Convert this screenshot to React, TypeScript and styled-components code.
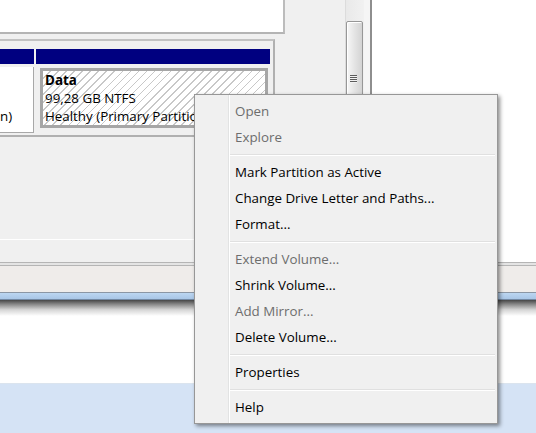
import React from 'react';
import styled, { createGlobalStyle } from 'styled-components';

const Global = createGlobalStyle`
  *, *::before, *::after { box-sizing: border-box; }
  html, body { margin: 0; padding: 0; background: #fff; }
  body {
    width: 536px; height: 433px; overflow: hidden;
    font-family: "Segoe UI", "Open Sans", "Noto Sans", sans-serif;
    font-size: 13.35px; color: #000;
  }
`;

const Screen = styled.div`
  position: relative;
  width: 536px;
  height: 433px;
  overflow: hidden;
  display: flex;
  flex-direction: column;
  background: #fff;
`;

const Window = styled.div`
  display: flex;
  flex-direction: column;
  flex: none;
`;

const Main = styled.div`
  display: flex;
  height: 262px;
`;

const LeftPane = styled.div`
  width: 372px;
  display: flex;
  flex-direction: column;
  background: #f0f0f0;
  border-right: 2px solid #8e8e8e;
`;

const GraphView = styled.div`
  height: 240px;
  display: flex;
  border-bottom: 1px solid #ffffff;
`;

const GraphContent = styled.div`
  width: 345px;
  display: flex;
  flex-direction: column;
  overflow: hidden;
  background: #f0f0f0;
`;

const PrevBox = styled.div`
  flex: none;
  width: 285px;
  height: 34px;
  background: #fff;
  border-right: 2px solid #bcbcbc;
  border-bottom: 2px solid #b4b4b4;
`;

const DiskRow = styled.div`
  flex: none;
  width: 275px;
  margin-top: 5px;
  display: flex;
  gap: 2px;
  padding: 8px 3px 2px 0;
  border-top: 2px solid #c2c2c2;
  border-right: 2px solid #b0b0b0;
  border-bottom: 2px solid #b0b0b0;
`;

const Cell = styled.div<{ $w: number }>`
  width: ${p => p.$w}px;
  display: flex;
  flex-direction: column;
`;

const CellHeader = styled.div`
  height: 15px;
  background: #000080;
  flex: none;
`;

const PlainBody = styled.div`
  flex: 1;
  margin-top: 3px;
  background: #fff;
  border-right: 1px solid #a8a8a8;
  border-bottom: 1px solid #a8a8a8;
  padding: 40px 0 0 0;
`;

const SelectedBody = styled.div`
  flex: 1;
  padding: 4px 2px 5px 4px;
  display: flex;
`;

const Hatch = styled.div`
  flex: 1;
  border: 3px solid #a6a6a6;
  background: repeating-linear-gradient(135deg, #ffffff 0 4.6px, #c8c8c8 4.6px 5.7px);
  padding-left: 2px;
  overflow: hidden;
`;

const VolumeText = styled.div`
  white-space: nowrap;
  line-height: 18px;
  color: #000;
`;

const VolumeName = styled.div`
  font-weight: 700;
`;

const ScrollTrack = styled.div`
  width: 19px;
  border-left: 1px solid #dcdcdc;
  background: linear-gradient(to right, #e9e9e9, #f1f1f1);
  padding: 21px 0 0 0;
  display: flex;
  flex-direction: column;
`;

const Thumb = styled.div`
  width: 17px;
  height: 115px;
  border: 1px solid #979797;
  border-radius: 2px;
  background: linear-gradient(to right, #f7f7f7, #e6e6e6 45%, #d3d3d3);
  box-shadow: inset 1px 1px 0 #ffffff;
  display: flex;
  align-items: center;
  justify-content: center;
`;

const Grip = styled.div`
  width: 7px;
  height: 8px;
  margin-right: 2px;
  background: repeating-linear-gradient(to bottom, #5c5c5c 0 1px, #f2f2f2 1px 2px);
`;

const TrackGap = styled.div`
  width: 6px;
  background: #f5f5f5;
`;

const LegendStrip = styled.div`
  flex: 1;
  background: #f0f0f0;
`;

const ActionsPane = styled.div`
  flex: 1;
  background: #fff;
`;

const Divider = styled.div`
  height: 4px;
  border-top: 1px solid #b5b5b5;
  border-bottom: 1px solid #b5b5b5;
  background: #e4e4e4;
`;

const StatusBar = styled.div`
  height: 26px;
  background: #efecea;
`;

const FrameBottom = styled.div`
  height: 8px;
  border-top: 1px solid #8b96a4;
  border-bottom: 1px solid #7489a3;
  background: linear-gradient(to bottom, #bcd6f1, #a9c6e6);
`;

const Shadow = styled.div`
  height: 16px;
  flex: none;
  background: linear-gradient(to bottom, #474747, #858585 25%, #d4d4d4 60%, #ffffff);
`;

const Desk = styled.div`
  height: 68px;
  flex: none;
  background: #fff;
  border-bottom: 1px solid #dbe4ee;
`;

const BlueArea = styled.div`
  flex: 1;
  background: #d5e3f5;
`;

const Menu = styled.div`
  position: absolute;
  left: 194px;
  top: 94px;
  width: 304px;
  padding: 3px 2px;
  border: 1px solid #979797;
  background: linear-gradient(to right, #f0f0f0 0 33px, #e2e3e3 33px 34px, #ffffff 34px 35px, #f0f0f0 35px);
  box-shadow: 2px 2px 4px rgba(0, 0, 0, 0.45);
  display: flex;
  flex-direction: column;
`;

const Item = styled.div<{ $disabled?: boolean }>`
  height: 26px;
  display: flex;
  align-items: center;
  padding-left: 38px;
  white-space: nowrap;
  color: ${p => (p.$disabled ? '#6d6d6d' : '#000')};
`;

const Separator = styled.div`
  height: 9px;
  margin-left: 33px;
  display: flex;
  flex-direction: column;
  justify-content: center;
  &::before {
    content: '';
    display: block;
    height: 1px;
    background: #e0e0e0;
  }
  &::after {
    content: '';
    display: block;
    height: 1px;
    background: #ffffff;
  }
`;

type Entry = { label?: string; disabled?: boolean; sep?: boolean };

const entries: Entry[] = [
  { label: 'Open', disabled: true },
  { label: 'Explore', disabled: true },
  { sep: true },
  { label: 'Mark Partition as Active' },
  { label: 'Change Drive Letter and Paths...' },
  { label: 'Format...' },
  { sep: true },
  { label: 'Extend Volume...', disabled: true },
  { label: 'Shrink Volume...' },
  { label: 'Add Mirror...', disabled: true },
  { label: 'Delete Volume...' },
  { sep: true },
  { label: 'Properties' },
  { sep: true },
  { label: 'Help' },
];

export default function App() {
  return (
    <>
      <Global />
      <Screen>
        <Window>
          <Main>
            <LeftPane>
              <GraphView>
                <GraphContent>
                  <PrevBox />
                  <DiskRow>
                    <Cell $w={34}>
                      <CellHeader />
                      <PlainBody>
                        <VolumeText>n)</VolumeText>
                      </PlainBody>
                    </Cell>
                    <Cell $w={234}>
                      <CellHeader />
                      <SelectedBody>
                        <Hatch>
                          <VolumeText>
                            <VolumeName>Data</VolumeName>
                            <div>99,28 GB NTFS</div>
                            <div>Healthy (Primary Partition)</div>
                          </VolumeText>
                        </Hatch>
                      </SelectedBody>
                    </Cell>
                  </DiskRow>
                </GraphContent>
                <ScrollTrack>
                  <Thumb>
                    <Grip />
                  </Thumb>
                </ScrollTrack>
                <TrackGap />
              </GraphView>
              <LegendStrip />
            </LeftPane>
            <ActionsPane />
          </Main>
          <Divider />
          <StatusBar />
          <FrameBottom />
        </Window>
        <Shadow />
        <Desk />
        <BlueArea />
        <Menu>
          {entries.map((e, i) =>
            e.sep ? (
              <Separator key={i} />
            ) : (
              <Item key={i} $disabled={e.disabled}>
                {e.label}
              </Item>
            )
          )}
        </Menu>
      </Screen>
    </>
  );
}
